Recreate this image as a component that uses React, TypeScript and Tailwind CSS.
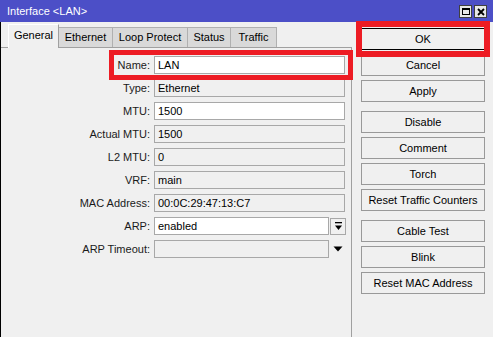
import React from 'react';

const font = { fontFamily: '"Liberation Sans", Arial, sans-serif' };

const tabs = [
  { label: 'General', w: 'w-[51px]', active: true },
  { label: 'Ethernet', w: 'w-[54px]' },
  { label: 'Loop Protect', w: 'w-[75px]' },
  { label: 'Status', w: 'w-[43px]' },
  { label: 'Traffic', w: 'w-[46px]' },
];

type Row = { label: string; value: string; edit?: boolean; kind?: 'select' | 'timeout' };

const rows: Row[] = [
  { label: 'Name:', value: 'LAN', edit: true },
  { label: 'Type:', value: 'Ethernet' },
  { label: 'MTU:', value: '1500', edit: true },
  { label: 'Actual MTU:', value: '1500' },
  { label: 'L2 MTU:', value: '0' },
  { label: 'VRF:', value: 'main' },
  { label: 'MAC Address:', value: '00:0C:29:47:13:C7' },
  { label: 'ARP:', value: 'enabled', edit: true, kind: 'select' },
  { label: 'ARP Timeout:', value: '', kind: 'timeout' },
];

const groups = [
  ['OK', 'Cancel', 'Apply'],
  ['Disable', 'Comment', 'Torch', 'Reset Traffic Counters'],
  ['Cable Test', 'Blink', 'Reset MAC Address'],
];

function Field({ row }: { row: Row }) {
  const box = (
    <div
      className={`h-[18px] flex items-center px-[3px] border border-[#a8a8a8] text-[11px] text-black ${
        row.edit ? 'bg-white' : 'bg-[#f0f0f0]'
      } ${row.kind ? 'w-[175px]' : 'w-[191px]'}`}
    >
      {row.value}
    </div>
  );
  return (
    <div className="flex items-center h-[18px]">
      <div className="w-[150px] text-right pr-[1px] text-[11px] text-[#1a1a1a]">{row.label}</div>
      <div className="ml-[3px] flex items-center">
        {box}
        {row.kind === 'select' && (
          <div className="ml-[1px] w-[16px] h-[17px] border border-[#a8a8a8] bg-[#f0f0f0] flex items-center justify-center">
            <svg width="9" height="9" viewBox="0 0 9 9">
              <rect x="1" y="0" width="7" height="1.3" fill="#000" />
              <path d="M1 3.5 H8 L4.5 8 Z" fill="#000" />
            </svg>
          </div>
        )}
        {row.kind === 'timeout' && (
          <div className="ml-[1px] w-[16px] h-[17px] flex items-center justify-center">
            <svg width="10" height="6" viewBox="0 0 10 6">
              <path d="M0.5 0.5 H9.5 L5 5.5 Z" fill="#000" />
            </svg>
          </div>
        )}
      </div>
    </div>
  );
}

export default function App() {
  return (
    <div className="relative w-[493px] h-[337px] overflow-hidden bg-[#f0f0f0]" style={font}>
      {/* Title bar */}
      <div className="h-[22px] bg-[#4c4fc7] flex items-center justify-between pl-[7px] pr-[6px]">
        <span className="text-[11px] text-white">Interface &lt;LAN&gt;</span>
        <div className="flex gap-[2px] mt-[1px]">
          <div className="w-[13px] h-[13px] bg-[#e8e8e8] border border-[#404040] flex items-center justify-center">
            <div className="w-[8px] h-[7px] border border-black border-t-2" />
          </div>
          <div className="w-[13px] h-[13px] bg-[#e8e8e8] border border-[#404040] flex items-center justify-center">
            <svg width="8" height="8" viewBox="0 0 8 8">
              <path d="M1 1 L7 7 M7 1 L1 7" stroke="#000" strokeWidth="1.8" />
            </svg>
          </div>
        </div>
      </div>

      <div className="flex h-[315px] border-l border-black">
        {/* Left: tabs + form */}
        <div className="w-[351px] flex flex-col">
          <div className="h-[25px] flex items-end pl-[7px]">
            {tabs.map((t) =>
              t.active ? (
                <div
                  key={t.label}
                  className={`${t.w} h-[24px] -mb-[1px] relative z-10 bg-[#f0f0f0] border-l border-t border-r border-l-white border-t-white border-r-[#a0a0a0] flex items-center justify-center pb-[3px] text-[11px] text-black`}
                >
                  {t.label}
                </div>
              ) : (
                <div
                  key={t.label}
                  className={`${t.w} h-[20px] bg-[#d9d9d9] border-t border-r border-[#b0b0b0] flex items-center justify-center text-[11px] text-black`}
                >
                  {t.label}
                </div>
              )
            )}
          </div>
          <div className="flex-1 border-t border-r border-[#a0a0a0] pt-[8px] flex flex-col gap-[5px]">
            {rows.map((r) => (
              <Field key={r.label} row={r} />
            ))}
          </div>
        </div>

        {/* Right: buttons */}
        <div className="flex-1 pl-[9px] pt-[6px] flex flex-col gap-[9px]">
          {groups.map((g, i) => (
            <div key={i} className="flex flex-col gap-[4px]">
              {g.map((b) => (
                <div
                  key={b}
                  className={`w-[124px] h-[22px] bg-[#f0f0f0] flex items-center justify-center text-[11px] text-black border ${
                    b === 'OK' ? 'border-black' : 'border-[#999999]'
                  }`}
                >
                  {b}
                </div>
              ))}
            </div>
          ))}
        </div>
      </div>

      {/* Highlight boxes */}
      <div className="absolute left-[109px] top-[50px] w-[244px] h-[30px] border-[5px] border-[#ed1c24] pointer-events-none" />
      <div className="absolute left-[356px] top-[21px] w-[134px] h-[36px] border-[6px] border-[#ed1c24] pointer-events-none" />
    </div>
  );
}
